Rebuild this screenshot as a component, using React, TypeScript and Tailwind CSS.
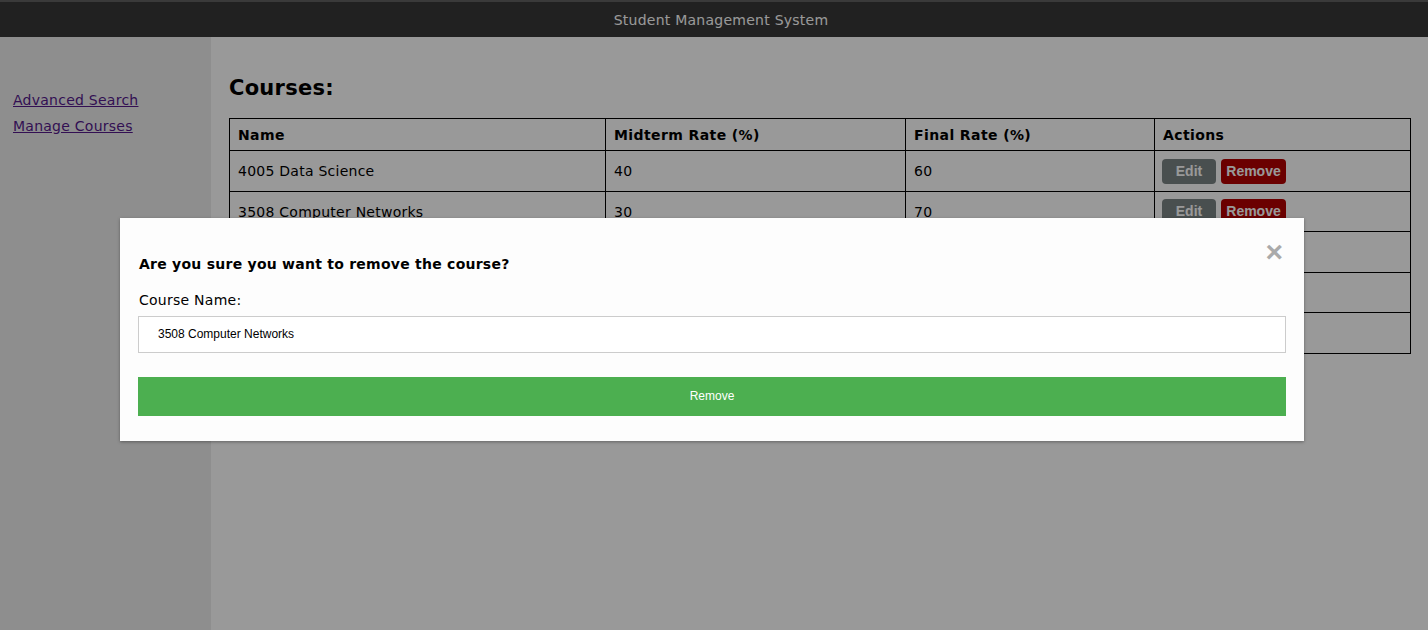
import React from "react";

const rows = [
  { name: "4005 Data Science", mid: "40", fin: "60" },
  { name: "3508 Computer Networks", mid: "30", fin: "70" },
  { name: "3301 Operating Systems", mid: "50", fin: "50" },
  { name: "2201 Algorithms", mid: "40", fin: "60" },
  { name: "1101 Programming", mid: "30", fin: "70" },
];

const arial = { fontFamily: '"Liberation Sans", Arial, sans-serif', letterSpacing: 0 };

export default function App() {
  return (
    <div
      className="relative w-[1428px] h-[630px] overflow-hidden bg-white text-black tracking-[0.25px]"
      style={{ fontFamily: '"DejaVu Sans", Verdana, sans-serif' }}
    >
      <header className="h-[37px] border-t-2 border-[#626262] bg-[#373737] flex items-center justify-center pt-[2px] pl-[14px]">
        <span className="text-[14px] text-white">Student Management System</span>
      </header>
      <div className="flex h-[593px]">
        <aside className="w-[211px] shrink-0 bg-[#ededed] pl-[13px] pt-[55px] flex flex-col gap-[9px]">
          <a href="#" className="text-[14px] leading-[17px] text-[#551a8b] underline">
            Advanced Search
          </a>
          <a href="#" className="text-[14px] leading-[17px] text-[#551a8b] underline">
            Manage Courses
          </a>
        </aside>
        <main className="flex-1 pl-[18px] pr-[17px] pt-[38px]">
          <h2 className="text-[21px] leading-[26px] font-bold">Courses:</h2>
          <table className="mt-[17px] w-full border-collapse border border-black text-[14px]">
            <colgroup>
              <col className="w-[376px]" />
              <col className="w-[300px]" />
              <col className="w-[249px]" />
              <col />
            </colgroup>
            <thead>
              <tr className="h-[32px]">
                {["Name", "Midterm Rate (%)", "Final Rate (%)", "Actions"].map((h) => (
                  <th key={h} className="border border-black px-[8px] pt-[2px] text-left font-bold leading-[17px] tracking-[0.4px]">
                    {h}
                  </th>
                ))}
              </tr>
            </thead>
            <tbody>
              {rows.map((r) => (
                <tr key={r.name} className="h-[40.5px]">
                  <td className="border border-black px-[8px] pt-[2px] leading-[17px]">{r.name}</td>
                  <td className="border border-black px-[8px] pt-[2px] leading-[17px]">{r.mid}</td>
                  <td className="border border-black px-[8px] pt-[2px] leading-[17px]">{r.fin}</td>
                  <td className="border border-black px-[7px] pt-[1px]">
                    <div className="flex gap-[5px]" style={arial}>
                      <button className="w-[54px] h-[25px] rounded-[4px] bg-[#7b8484] text-white font-bold text-[14px]">
                        Edit
                      </button>
                      <button className="w-[65px] h-[25px] rounded-[4px] bg-[#b20000] text-white font-bold text-[14px]">
                        Remove
                      </button>
                    </div>
                  </td>
                </tr>
              ))}
            </tbody>
          </table>
        </main>
      </div>

      <div className="absolute inset-0 bg-black/40" />

      <div className="absolute left-[120px] top-[218px] w-[1184px] bg-[#fdfdfd] px-[18px] pt-[38px] pb-[25px] shadow-[0_1px_3px_rgba(0,0,0,0.35)]">
        <span
          className="absolute right-[21px] top-[21px] text-[30px] leading-[26px] font-bold text-[#aaaaaa]"
          style={arial}
        >
          ×
        </span>
        <h3 className="text-[14px] leading-[17px] font-bold pl-[1px]">Are you sure you want to remove the course?</h3>
        <div className="mt-[18.5px] text-[14px] leading-[17px] pl-[1px]">Course Name:</div>
        <div
          className="mt-[7.5px] h-[37px] border border-[#cccccc] bg-white pl-[19px] pb-[2px] flex items-center text-[12px]"
          style={arial}
        >
          3508 Computer Networks
        </div>
        <button className="mt-[24px] h-[39px] w-full bg-[#4caf50] text-white text-[12px] pb-[2px]" style={arial}>
          Remove
        </button>
      </div>
    </div>
  );
}
